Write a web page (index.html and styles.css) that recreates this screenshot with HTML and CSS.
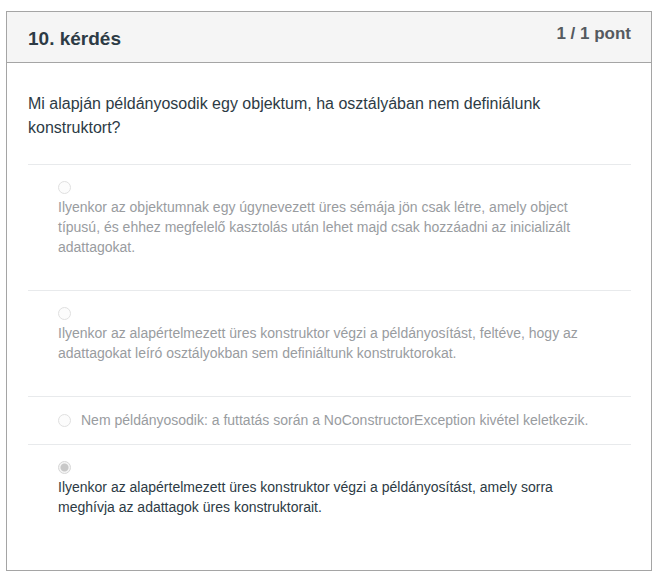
FILE: index.html
```html
<!DOCTYPE html>
<html lang="hu">
<head>
<meta charset="utf-8">
<link rel="stylesheet" href="styles.css">
</head>
<body>
<div class="question">
  <div class="header">
    <h2 class="title">10. kérdés</h2>
    <span class="points">1 / 1 pont</span>
  </div>
  <div class="content">
    <p class="qtext">Mi alapján példányosodik egy objektum, ha osztályában nem definiálunk konstruktort?</p>
    <div class="answers">
      <div class="answer multi">
        <span class="radio"></span>
        <div class="atext">Ilyenkor az objektumnak egy úgynevezett üres sémája jön csak létre, amely object típusú, és ehhez megfelelő kasztolás után lehet majd csak hozzáadni az inicializált adattagokat.</div>
      </div>
      <div class="answer multi">
        <span class="radio"></span>
        <div class="atext">Ilyenkor az alapértelmezett üres konstruktor végzi a példányosítást, feltéve, hogy az adattagokat leíró osztályokban sem definiáltunk konstruktorokat.</div>
      </div>
      <div class="answer single">
        <span class="radio"></span>
        <span class="atext">Nem példányosodik: a futtatás során a NoConstructorException kivétel keletkezik.</span>
      </div>
      <div class="answer multi selected">
        <span class="radio checked"></span>
        <div class="atext">Ilyenkor az alapértelmezett üres konstruktor végzi a példányosítást, amely sorra meghívja az adattagok üres konstruktorait.</div>
      </div>
    </div>
  </div>
</div>
</body>
</html>
```

FILE: styles.css
```css
html, body {
  margin: 0;
  padding: 0;
  background: #ffffff;
}
body {
  padding: 11px 0 0 6px;
  font-family: "Liberation Sans", Arial, sans-serif;
}
.question {
  width: 644px;
  height: 558px;
  border: 1px solid #a5a5a5;
  background: #fff;
}
.header {
  height: 50px;
  background: #f5f5f5;
  border-bottom: 1px solid #a5a5a5;
  display: flex;
  justify-content: space-between;
  align-items: flex-start;
  padding: 0 20px 0 21px;
}
.title {
  margin: 15px 0 0 0;
  font-size: 19px;
  font-weight: bold;
  color: #2d3b45;
  line-height: 24px;
}
.points {
  margin-top: 12px;
  font-size: 17px;
  font-weight: bold;
  color: #555a5f;
  line-height: 20px;
}
.content {
  padding: 29px 20px 0 21px;
}
.qtext {
  margin: 0;
  font-size: 16px;
  line-height: 24px;
  color: #2d3b45;
  padding-right: 20px;
}
.answers {
  margin-top: 24px;
}
.answer {
  border-top: 1px solid #e8eaec;
  padding: 16px 30px 0 30px;
  font-size: 14px;
  line-height: 20px;
  color: #999c9f;
}
.answer.multi {
  padding-bottom: 33px;
}
.answer.single {
  padding-top: 13px;
  padding-bottom: 14px;
  display: flex;
  align-items: center;
}
.answer.selected {
  color: #2d3b45;
}
.radio {
  display: block;
  width: 11px;
  height: 11px;
  border: 1px solid #e0e0e0;
  border-radius: 50%;
  background: #fcfcfc;
  box-sizing: content-box;
  margin-bottom: 3px;
}
.single .radio {
  display: inline-block;
  margin: 0 10px 0 0;
  flex: none;
}
.radio.checked {
  border-color: #d6d6d6;
  background: radial-gradient(circle, #c8c8c8 0 3.5px, #f4f4f4 4.5px);
}
.atext {
  margin: 0;
}
```
